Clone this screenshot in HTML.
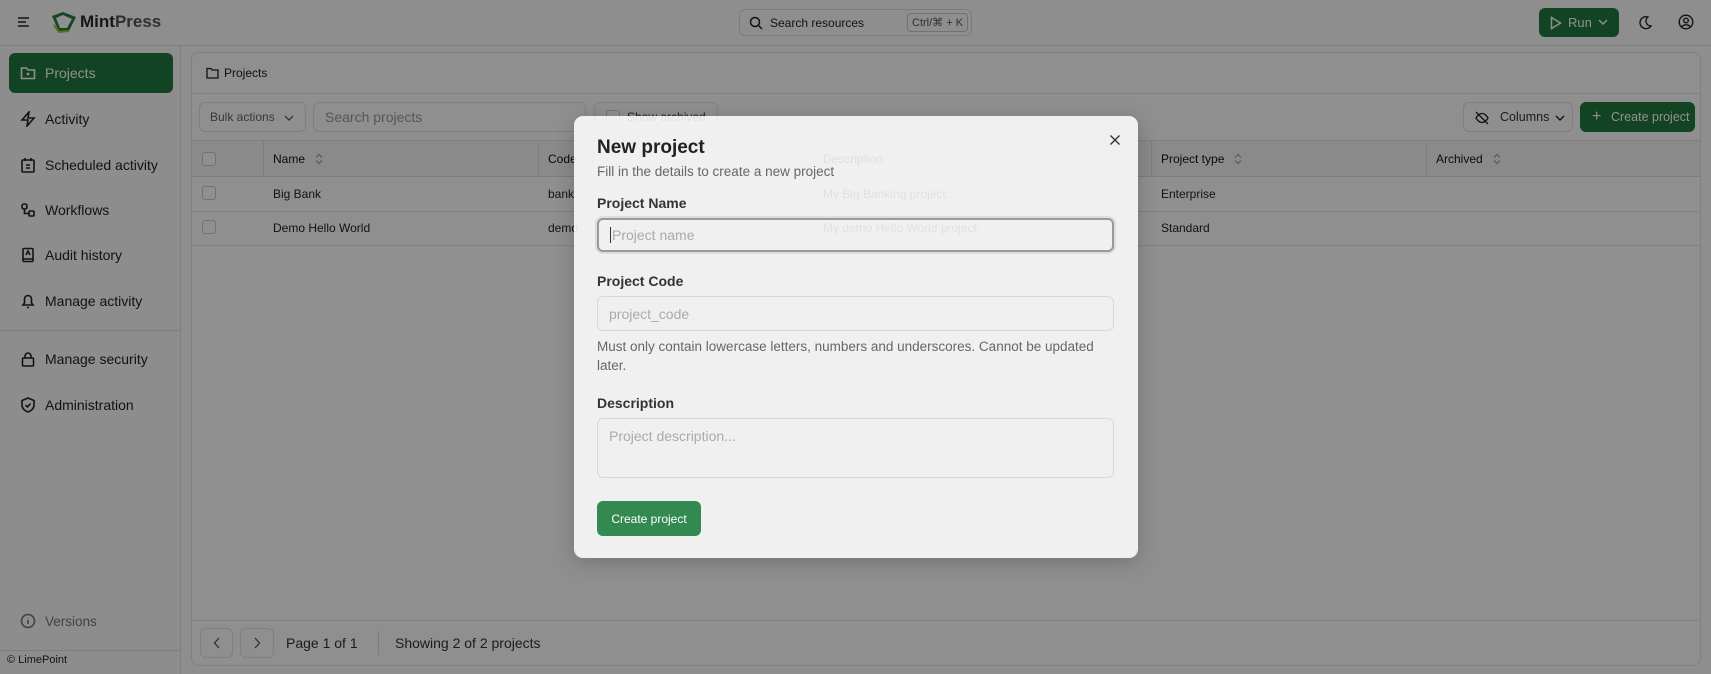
<!DOCTYPE html>
<html><head><meta charset="utf-8"><style>
*{box-sizing:border-box;margin:0;padding:0}
body{width:1711px;height:674px;overflow:hidden;font-family:"Liberation Sans",sans-serif;background:#fdfdfd;color:#1a1a1a;position:relative}
.abs{position:absolute}
.hdr{left:0;top:0;width:1711px;height:46px;border-bottom:1px solid #e2e2e2;background:#fefefe}
.side{left:0;top:46px;width:181px;height:628px;border-right:1px solid #e2e2e2;background:#fbfbfb}
.nav{position:absolute;left:9px;width:164px;height:40px;display:flex;align-items:center;font-size:14px;color:#222}
.nav svg{margin:0 9px 0 11px;width:16px;height:16px;fill:none;stroke:#222;stroke-width:1.6}
.card{left:191px;top:52px;width:1510px;height:614px;border:1px solid #e4e4e4;border-radius:8px;background:#fff}
.btn{position:absolute;border:1px solid #e3e3e3;border-radius:6px;display:flex;align-items:center;font-size:13px;color:#333;background:#fff}
.th{position:absolute;top:0;height:36px;display:flex;align-items:center;font-size:12px;color:#111;border-right:1px solid #e0e0e0}
.th svg{margin-left:10px}
.td{position:absolute;font-size:12px;color:#222}
.ov{left:0;top:0;width:1711px;height:674px;background:rgba(0,0,0,0.44)}
.modal{left:574px;top:116px;width:564px;height:442px;border-radius:9px;background:rgba(255,255,255,0.87);box-shadow:0 4px 20px rgba(0,0,0,.2)}
.lbl{position:absolute;left:23px;font-size:14px;font-weight:bold;color:#333}
.inp{position:absolute;left:23px;width:517px;border:1px solid #d8d8d8;border-radius:6px;font-size:14px;color:#aaa;padding-left:11px;display:flex;align-items:center}
</style></head><body>
<div class="abs hdr">
 <svg class="abs" style="left:17px;top:16px" width="14" height="12"><path d="M1 2h11M1 6h8M1 10h11" stroke="#222" stroke-width="1.6"/></svg>
 <svg class="abs" style="left:49px;top:11px" width="30" height="24" viewBox="0 0 30 24"><path d="M3 5 L14 1 L27 6 L20 20 L10 21 Z" fill="#2e7d3a"/><path d="M7 7 L14 4 L23 8 L18 17 L11 17 Z" fill="#fff"/><path d="M20 20 L10 21 L5 14" fill="none" stroke="#9c3" stroke-width="2"/></svg>
 <div class="abs" style="left:80px;top:12px;font-size:17px;font-weight:bold;color:#2a2a2a">Mint<span style="font-weight:bold;color:#555">Press</span></div>
 <div class="abs" style="left:739px;top:9px;width:233px;height:27px;border:1px solid #ddd;border-radius:6px;font-size:12px;color:#222">
  <svg class="abs" style="left:9px;top:6px" width="14" height="14"><circle cx="6" cy="6" r="4.5" fill="none" stroke="#222" stroke-width="1.5"/><path d="M9.5 9.5l3.5 3.5" stroke="#222" stroke-width="1.5"/></svg>
  <span class="abs" style="left:30px;top:6px">Search resources</span>
  <span class="abs" style="left:167px;top:3px;border:1px solid #ccc;border-radius:4px;padding:2px 4px;font-size:11px;color:#555">Ctrl/⌘ + K</span>
 </div>
 <div class="abs" style="left:1539px;top:8px;width:80px;height:29px;background:#207a3f;border-radius:6px;color:#fff;font-size:13px">
  <svg class="abs" style="left:11px;top:8px" width="12" height="14"><path d="M1.5 1.5v11l9-5.5z" fill="none" stroke="#fff" stroke-width="1.5"/></svg>
  <span class="abs" style="left:29px;top:7px">Run</span>
  <svg class="abs" style="left:59px;top:11px" width="10" height="7"><path d="M1 1l4 4 4-4" fill="none" stroke="#fff" stroke-width="1.5"/></svg>
 </div>
 <svg class="abs" style="left:1637px;top:15px" width="15" height="15"><path d="M11 2a6 6 0 1 0 3 9a5 5 0 0 1-3-9z" fill="none" stroke="#222" stroke-width="1.4"/></svg>
 <svg class="abs" style="left:1678px;top:14px" width="16" height="16"><circle cx="8" cy="8" r="6.8" fill="none" stroke="#222" stroke-width="1.4"/><circle cx="8" cy="6.5" r="2.3" fill="none" stroke="#222" stroke-width="1.4"/><path d="M3.8 12.8c2-2.6 6.4-2.6 8.4 0" fill="none" stroke="#222" stroke-width="1.4"/></svg>
</div>
<div class="abs side">
 <div class="nav" style="top:7px;background:#207a3f;border-radius:6px;color:#fff"><svg style="stroke:#fff" viewBox="0 0 16 16"><path d="M1.5 3h5l1.5 2h6.5v8.5h-13z"/><circle cx="8" cy="9" r=".6"/></svg>Projects</div>
 <div class="nav" style="top:53px"><svg viewBox="0 0 16 16"><path d="M9 1L2 9h6l-1 6 7-8H8z"/></svg>Activity</div>
 <div class="nav" style="top:99px"><svg viewBox="0 0 16 16"><rect x="2" y="3" width="12" height="12" rx="1"/><path d="M5 1v3M11 1v3M6 8h4M6 11h4"/></svg>Scheduled activity</div>
 <div class="nav" style="top:144px"><svg viewBox="0 0 16 16"><rect x="2" y="2" width="5" height="5" rx="2"/><rect x="9" y="9" width="5" height="5" rx="1"/><path d="M4.5 7v4.5H9"/></svg>Workflows</div>
 <div class="nav" style="top:189px"><svg viewBox="0 0 16 16"><rect x="3" y="1.5" width="10" height="13" rx="1"/><path d="M6 8l2-4 2 4M3 12h10"/></svg>Audit history</div>
 <div class="nav" style="top:235px"><svg viewBox="0 0 16 16"><path d="M3 12h10l-1.5-2V6a3.5 3.5 0 0 0-7 0v4zM7 14.5h2"/></svg>Manage activity</div>
 <div class="abs" style="left:0;top:284px;width:181px;border-top:1px solid #e0e0e0"></div>
 <div class="nav" style="top:293px"><svg viewBox="0 0 16 16"><rect x="2.5" y="7" width="11" height="8" rx="1"/><path d="M5 7V5a3 3 0 0 1 6 0v2"/></svg>Manage security</div>
 <div class="nav" style="top:339px"><svg viewBox="0 0 16 16"><path d="M8 1l6 2.5v4.5c0 3.5-3 6-6 7-3-1-6-3.5-6-7V3.5z"/><path d="M5.5 8l2 2 3-3.5"/></svg>Administration</div>
 <div class="nav" style="top:555px;color:#777;font-size:13.5px"><svg style="stroke:#777" viewBox="0 0 16 16"><circle cx="8" cy="8" r="6.5"/><path d="M8 7v4M8 5v.5"/></svg>Versions</div>
 <div class="abs" style="left:0;top:604px;width:181px;border-top:1px solid #e0e0e0"></div>
 <div class="abs" style="left:7px;top:608px;font-size:11px;color:#222">© LimePoint</div>
</div>
<div class="abs card">
 <div class="abs" style="left:14px;top:13px;font-size:12px;display:flex;align-items:center"><svg width="13" height="12" style="margin-right:5px"><path d="M1 1.5h4l1 1.5h6v8H1z" fill="none" stroke="#222" stroke-width="1.3"/></svg>Projects</div>
 <div class="abs" style="left:0;top:40px;width:1508px;border-top:1px solid #e4e4e4"></div>
 <div class="btn" style="left:7px;top:49px;width:107px;height:30px;padding-left:10px;font-size:12px;color:#666">Bulk actions
  <svg class="abs" style="left:84px;top:12px" width="10" height="7"><path d="M1 1l4 4 4-4" fill="none" stroke="#666" stroke-width="1.4"/></svg></div>
 <div class="btn" style="left:121px;top:49px;width:273px;height:30px;padding-left:11px;font-size:14px;color:#999">Search projects</div>
 <div class="btn" style="left:402px;top:49px;width:124px;height:30px;padding-left:32px;font-size:12px"><span class="abs" style="left:11px;top:7px;width:14px;height:14px;border:1px solid #ccc;border-radius:3px"></span>Show archived</div>
 <div class="btn" style="left:1271px;top:49px;width:110px;height:30px;padding-left:36px;font-size:12.5px">Columns
  <svg class="abs" style="left:91px;top:12px" width="10" height="7"><path d="M1 1l4 4 4-4" fill="none" stroke="#222" stroke-width="1.4"/></svg>
  <svg class="abs" style="left:11px;top:8px" width="14" height="14"><path d="M1 7s2.5-4.5 6-4.5S13 7 13 7s-2.5 4.5-6 4.5S1 7 1 7z M1 1l12 12" fill="none" stroke="#222" stroke-width="1.3"/></svg></div>
 <div class="btn" style="left:1388px;top:49px;width:115px;height:30px;background:#207a3f;border-color:#207a3f;color:#fff;padding-left:30px;font-size:12.5px">Create project<span class="abs" style="left:11px;top:5px;font-size:16px">+</span></div>
 <div class="abs" style="left:0;top:87px;width:1508px;height:37px;background:#f7f7f7;border-top:1px solid #e4e4e4;border-bottom:1px solid #ddd">
  <div class="th" style="left:0;width:72px"><span style="margin-left:10px;width:14px;height:14px;border:1px solid #ccc;border-radius:3px;background:#fff"></span></div>
  <div class="th" style="left:72px;width:275px;padding-left:9px">Name <svg width="8" height="12"><path d="M1 4.5l3-3 3 3M1 7.5l3 3 3-3" fill="none" stroke="#999" stroke-width="1.1"/></svg></div>
  <div class="th" style="left:347px;width:275px;padding-left:9px">Code <svg width="8" height="12"><path d="M1 4.5l3-3 3 3M1 7.5l3 3 3-3" fill="none" stroke="#999" stroke-width="1.1"/></svg></div>
  <div class="th" style="left:622px;width:338px;padding-left:9px">Description <svg width="8" height="12"><path d="M1 4.5l3-3 3 3M1 7.5l3 3 3-3" fill="none" stroke="#999" stroke-width="1.1"/></svg></div>
  <div class="th" style="left:960px;width:275px;padding-left:9px">Project type <svg width="8" height="12"><path d="M1 4.5l3-3 3 3M1 7.5l3 3 3-3" fill="none" stroke="#999" stroke-width="1.1"/></svg></div>
  <div class="th" style="left:1235px;width:273px;padding-left:9px;border:none">Archived <svg width="8" height="12"><path d="M1 4.5l3-3 3 3M1 7.5l3 3 3-3" fill="none" stroke="#999" stroke-width="1.1"/></svg></div>
 </div>
 <div class="abs" style="left:0;top:158px;width:1508px;border-top:1px solid #e4e4e4"></div>
 <div class="abs" style="left:0;top:192px;width:1508px;border-top:1px solid #e4e4e4"></div>
 <span class="abs" style="left:10px;top:133px;width:14px;height:14px;border:1px solid #ccc;border-radius:3px"></span>
 <span class="abs" style="left:10px;top:167px;width:14px;height:14px;border:1px solid #ccc;border-radius:3px"></span>
 <div class="td" style="left:81px;top:134px">Big Bank</div><div class="td" style="left:356px;top:134px">bank</div><div class="td" style="left:631px;top:134px">My Big Banking project.</div><div class="td" style="left:969px;top:134px">Enterprise</div>
 <div class="td" style="left:81px;top:168px">Demo Hello World</div><div class="td" style="left:356px;top:168px">demo</div><div class="td" style="left:631px;top:168px">My demo Hello World project.</div><div class="td" style="left:969px;top:168px">Standard</div>
 <div class="abs" style="left:0;top:567px;width:1508px;border-top:1px solid #e4e4e4"></div>
 <div class="btn" style="left:8px;top:575px;width:33px;height:30px;justify-content:center"><svg width="8" height="12"><path d="M6 1L1.5 6 6 11" fill="none" stroke="#555" stroke-width="1.3"/></svg></div>
 <div class="btn" style="left:48px;top:575px;width:34px;height:30px;justify-content:center"><svg width="8" height="12"><path d="M2 1l4.5 5L2 11" fill="none" stroke="#555" stroke-width="1.3"/></svg></div>
 <div class="abs" style="left:94px;top:582px;font-size:14px;color:#333">Page 1 of 1</div>
 <div class="abs" style="left:186px;top:578px;height:24px;border-left:1px solid #ddd"></div>
 <div class="abs" style="left:203px;top:582px;font-size:14px;color:#333">Showing 2 of 2 projects</div>
</div>
<div class="abs ov"></div>
<div class="abs modal">
 <div class="abs" style="left:23px;top:21px;font-size:19px;font-weight:bold;color:#222">New project</div>
 <div class="abs" style="left:23px;top:48px;font-size:13.5px;color:#666">Fill in the details to create a new project</div>
 <svg class="abs" style="left:535px;top:18px" width="12" height="12"><path d="M1.5 1.5l9 9M10.5 1.5l-9 9" stroke="#333" stroke-width="1.4"/></svg>
 <div class="lbl" style="top:79px">Project Name</div>
 <div class="inp" style="top:102px;height:34px;border:2px solid #999;box-shadow:0 0 0 2px #ddd"><span style="border-left:1px solid #333;padding-left:1px">Project name</span></div>
 <div class="lbl" style="top:157px">Project Code</div>
 <div class="inp" style="top:180px;height:35px">project_code</div>
 <div class="abs" style="left:23px;top:221px;width:525px;font-size:13.5px;line-height:19px;color:#666">Must only contain lowercase letters, numbers and underscores. Cannot be updated later.</div>
 <div class="lbl" style="top:279px">Description</div>
 <div class="inp" style="top:302px;height:60px;align-items:flex-start;padding-top:9px">Project description...</div>
 <div class="abs" style="left:23px;top:385px;width:104px;height:35px;background:#338a50;border-radius:6px;color:#fff;font-size:12px;display:flex;align-items:center;justify-content:center">Create project</div>
</div>
</body></html>
